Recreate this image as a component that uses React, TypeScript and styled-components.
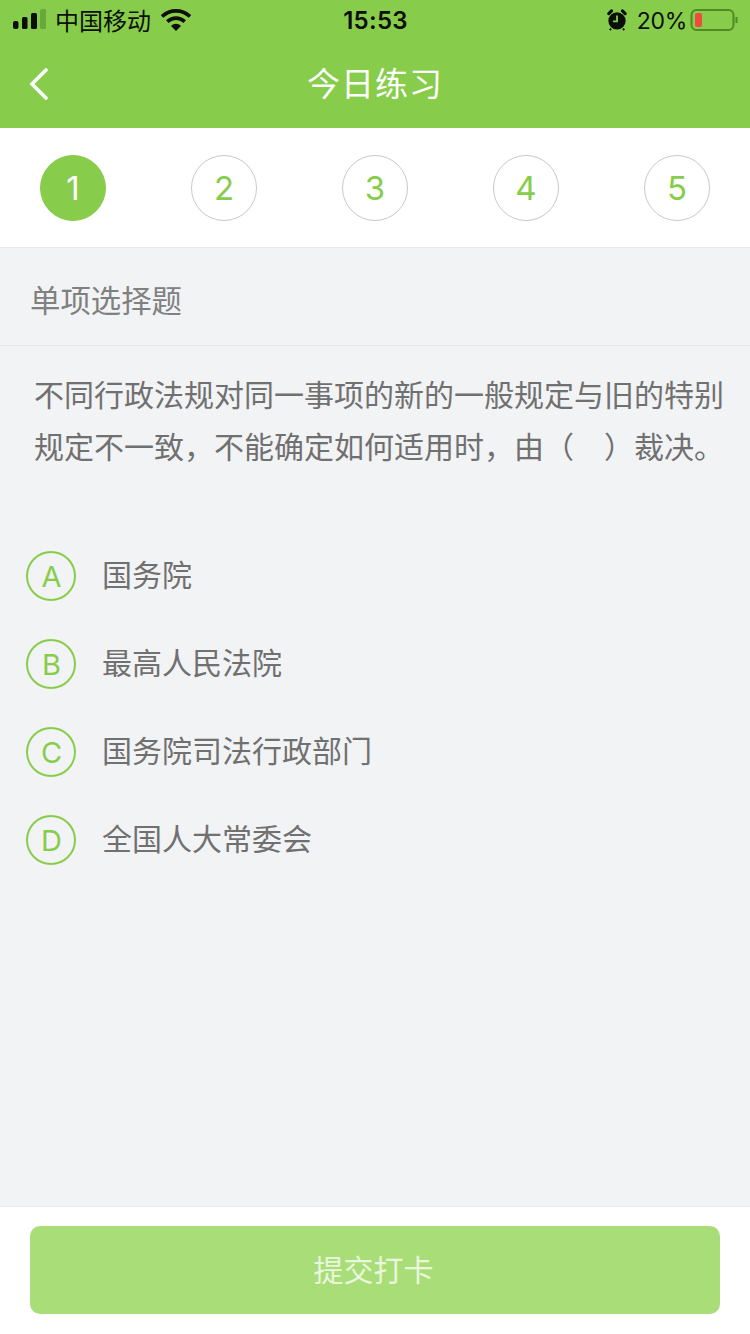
import React from 'react';
import styled, { createGlobalStyle } from 'styled-components';

const GREEN = '#87cd4b';
const CJK = '"Noto Sans CJK SC", "Liberation Sans", sans-serif';

const GlobalStyle = createGlobalStyle`
  html, body { margin: 0; padding: 0; background: #f2f3f5; }
  * { box-sizing: border-box; }
  body { font-family: "Inter", "Noto Sans CJK SC", sans-serif; }
`;

const Page = styled.div`
  width: 750px;
  height: 1334px;
  display: flex;
  flex-direction: column;
  background: #f2f3f5;
  overflow: hidden;
`;

const Header = styled.header`
  height: 128px;
  background: ${GREEN};
  display: flex;
  flex-direction: column;
`;

const StatusBar = styled.div`
  height: 40px;
  padding: 0 12px 0 13px;
  display: flex;
  align-items: center;
  justify-content: space-between;
  color: #0c0f08;
`;

const StatusLeft = styled.div`
  display: flex;
  align-items: center;
  gap: 9px;
  flex: 1;
`;

const StatusRight = styled.div`
  display: flex;
  align-items: center;
  justify-content: flex-end;
  gap: 10px;
  flex: 1;
`;

const Carrier = styled.span`
  font: 400 24px/40px ${CJK};
`;

const Clock = styled.span`
  font: 600 24px/42px "Inter", sans-serif;
  height: 40px;
  letter-spacing: 0.3px;
`;

const Percent = styled.span`
  font: 400 23px/42px "Inter", sans-serif;
  height: 40px;
  letter-spacing: -0.3px;
`;

const NavBar = styled.div`
  height: 88px;
  display: flex;
  align-items: center;
  justify-content: center;
  padding-bottom: 4px;
  position: relative;
`;

const BackIcon = styled.svg`
  position: absolute;
  left: 29px;
  top: 28px;
`;

const NavTitle = styled.h1`
  margin: 0;
  color: #fff;
  font: 400 33px/1 ${CJK};
  letter-spacing: 1px;
`;

const Steps = styled.div`
  height: 120px;
  padding: 27px 40px 0;
  display: flex;
  justify-content: space-between;
  background: #fff;
  border-bottom: 1px solid #e8e9eb;
`;

const Step = styled.div<{ $active?: boolean }>`
  width: 66px;
  height: 66px;
  border-radius: 50%;
  display: flex;
  align-items: center;
  justify-content: center;
  font: 400 33px/1 "Inter", sans-serif;
  color: ${(p) => (p.$active ? '#fff' : GREEN)};
  background: ${(p) => (p.$active ? GREEN : '#fff')};
  border: 1px solid ${(p) => (p.$active ? GREEN : '#c9c9c9')};
`;

const SectionTitle = styled.div`
  height: 98px;
  padding: 6px 0 0 30px;
  display: flex;
  align-items: center;
  color: #808080;
  font: 400 30.4px/1 ${CJK};
  border-bottom: 1px solid #e6e7e9;
`;

const Question = styled.p`
  margin: 0;
  padding: 21px 20px 0 34px;
  height: 205px;
  color: #707070;
  font: 400 30px/52px ${CJK};
`;

const Options = styled.ul`
  list-style: none;
  margin: 0;
  padding: 0 0 0 26px;
  flex: 1;
  display: flex;
  flex-direction: column;
  gap: 38px;
`;

const Option = styled.li`
  height: 50px;
  display: flex;
  align-items: center;
  gap: 26px;
`;

const OptionBadge = styled.span`
  width: 50px;
  height: 50px;
  padding: 1px 0 0 1px;
  border-radius: 50%;
  border: 2px solid ${GREEN};
  color: ${GREEN};
  display: flex;
  align-items: center;
  justify-content: center;
  font: 400 29px/1 "Inter", sans-serif;
`;

const OptionText = styled.span`
  color: #707070;
  font: 400 30px/1 ${CJK};
  margin-top: -6px;
`;

const Footer = styled.footer`
  height: 128px;
  padding: 19px 30px 0;
  background: #fff;
  border-top: 1px solid #e8e9eb;
`;

const SubmitButton = styled.button`
  width: 690px;
  height: 88px;
  border: 0;
  padding: 0 3px 4px 0;
  border-radius: 10px;
  background: #a9dd78;
  color: #e9f7dc;
  font: 400 30px/1 ${CJK};
`;

const options = [
  ['A', '国务院'],
  ['B', '最高人民法院'],
  ['C', '国务院司法行政部门'],
  ['D', '全国人大常委会'],
];

export default function App() {
  return (
    <Page>
      <GlobalStyle />
      <Header>
        <StatusBar>
          <StatusLeft>
            <svg width="33" height="22" viewBox="0 0 33 22">
              <rect x="0" y="12" width="5.5" height="8" rx="2" fill="#0c0f08" />
              <rect x="9" y="8" width="5.5" height="12" rx="1.5" fill="#0c0f08" />
              <rect x="18" y="4" width="6" height="16" rx="1.5" fill="#0c0f08" />
              <rect x="27" y="0" width="6" height="20" rx="1.5" fill="#5f9a38" opacity="0.75" />
            </svg>
            <Carrier>中国移动</Carrier>
            <svg width="30" height="22" viewBox="0 0 30 22" style={{ marginLeft: 1 }}>
              <path d="M1 7.5C9 0 21 0 29 7.5" fill="none" stroke="#0c0f08" strokeWidth="3.6" />
              <path d="M6.3 12.6C11.5 8 18.5 8 23.7 12.6" fill="none" stroke="#0c0f08" strokeWidth="3.6" />
              <path d="M10 17C13 14 17 14 20 17L15 22Z" fill="#0c0f08" />
            </svg>
          </StatusLeft>
          <Clock>15:53</Clock>
          <StatusRight>
            <svg width="20" height="22" viewBox="0 0 22 24">
              <circle cx="11" cy="13" r="9.5" fill="#0c0f08" />
              <path d="M2 5 5 2M20 5l-3-3" stroke="#0c0f08" strokeWidth="3.4" strokeLinecap="round" />
              <path d="M4.5 21.5 3 23M17.5 21.5 19 23" stroke="#0c0f08" strokeWidth="2" />
              <path d="M11 7v6.5H6.5" fill="none" stroke={GREEN} strokeWidth="2" />
            </svg>
            <Percent>20%</Percent>
            <svg width="48" height="24" viewBox="0 0 48 24" style={{ marginLeft: -7 }}>
              <rect x="1.5" y="2" width="42" height="20" rx="5" fill="none" stroke="#4f8a26" strokeWidth="2" />
              <rect x="5" y="5" width="7" height="14" rx="2" fill="#ef4b3f" />
              <path d="M46.5 9v6" stroke="#4f8a26" strokeWidth="2" />
            </svg>
          </StatusRight>
        </StatusBar>
        <NavBar>
          <BackIcon width="20" height="32" viewBox="0 0 20 32">
            <path d="M17 2 3 16l14 14" fill="none" stroke="#fff" strokeWidth="3.6" strokeLinecap="round" />
          </BackIcon>
          <NavTitle>今日练习</NavTitle>
        </NavBar>
      </Header>
      <Steps>
        {[1, 2, 3, 4, 5].map((n) => (
          <Step key={n} $active={n === 1}>
            {n}
          </Step>
        ))}
      </Steps>
      <SectionTitle>单项选择题</SectionTitle>
      <Question>
        不同行政法规对同一事项的新的一般规定与旧的特别规定不一致，不能确定如何适用时，由（　）裁决。
      </Question>
      <Options>
        {options.map(([letter, text]) => (
          <Option key={letter}>
            <OptionBadge>{letter}</OptionBadge>
            <OptionText>{text}</OptionText>
          </Option>
        ))}
      </Options>
      <Footer>
        <SubmitButton>提交打卡</SubmitButton>
      </Footer>
    </Page>
  );
}
